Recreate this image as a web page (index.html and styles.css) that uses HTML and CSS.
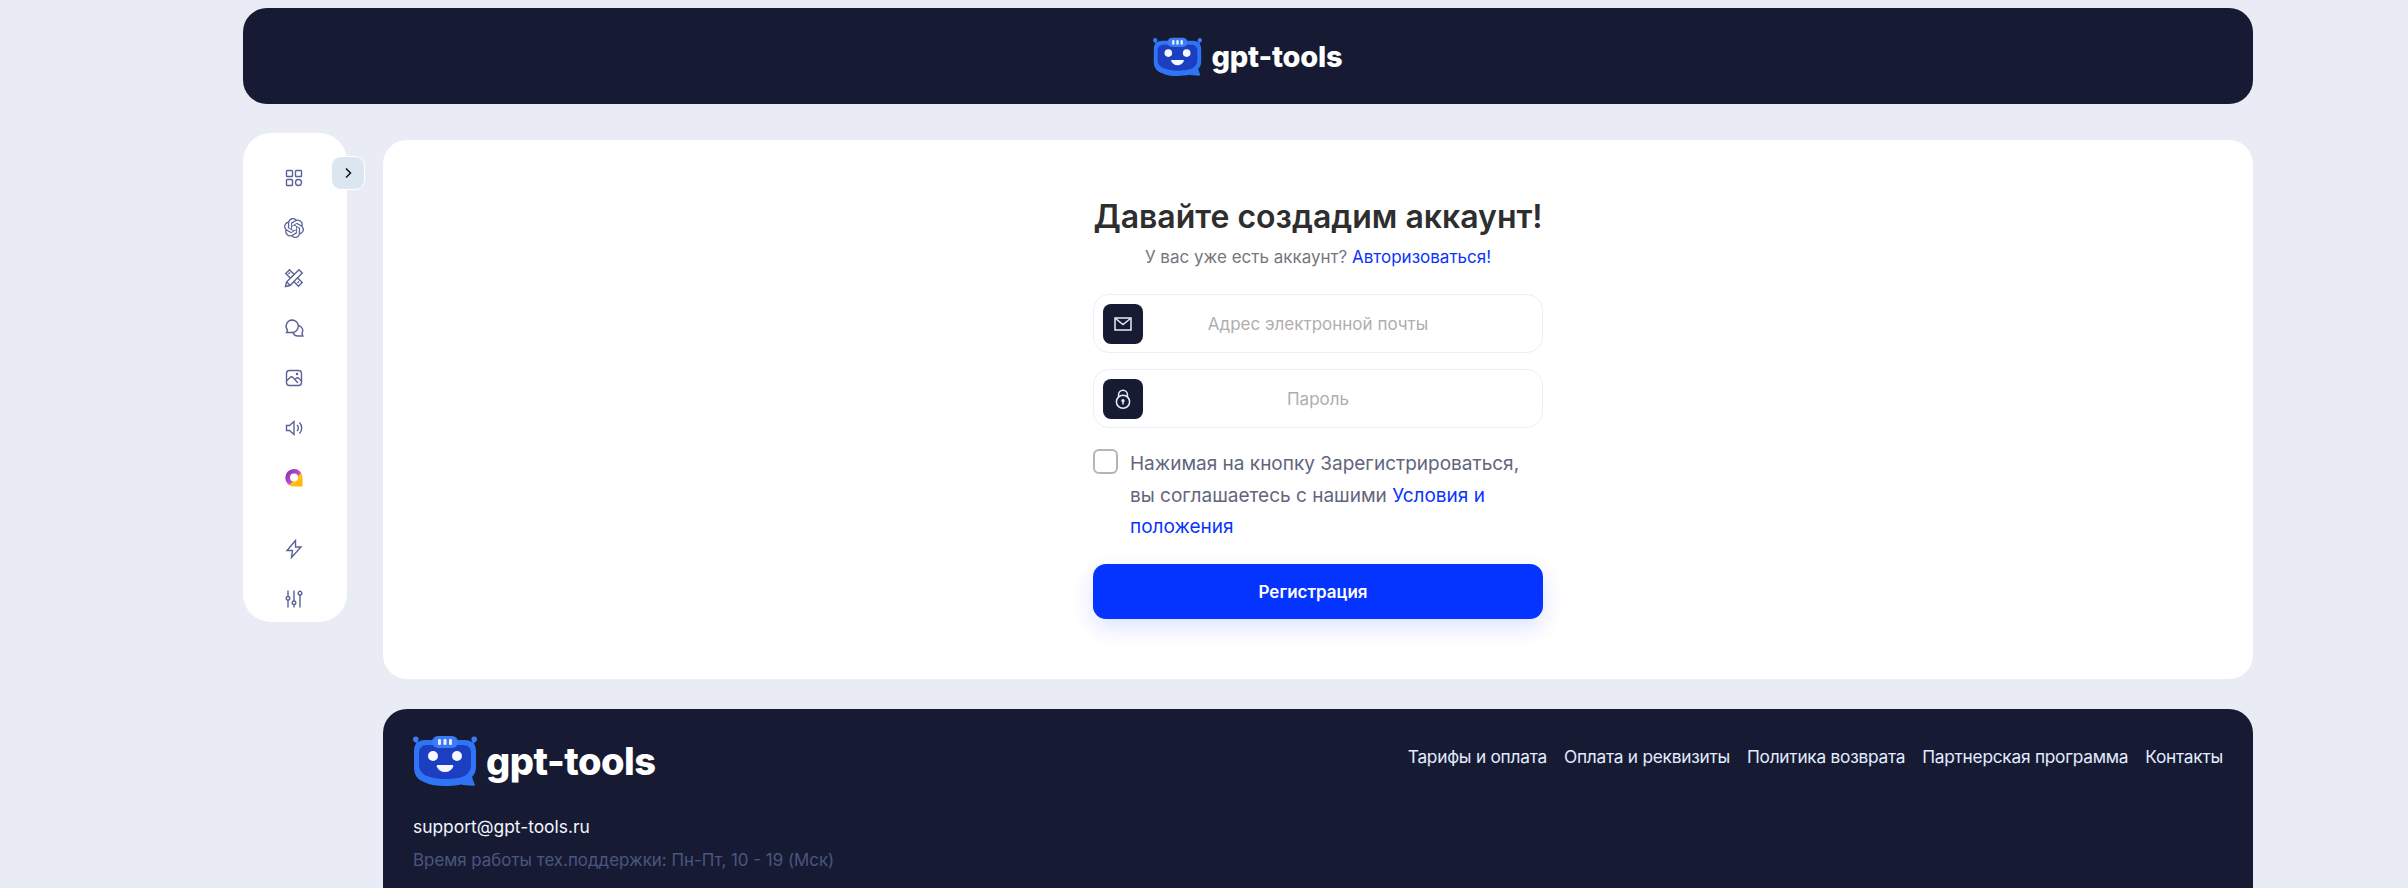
FILE: index.html
```html
<!DOCTYPE html>
<html lang="ru">
<head>
<meta charset="utf-8">
<title>gpt-tools</title>
<link rel="stylesheet" href="styles.css">
</head>
<body>
<svg class="defs" width="0" height="0" aria-hidden="true">
  <defs>
    <linearGradient id="qg" x1="0" y1="0" x2="1" y2="1">
      <stop offset="0" stop-color="#6a2fb0"/><stop offset=".55" stop-color="#c94fc9"/><stop offset=".6" stop-color="#ffc414"/><stop offset="1" stop-color="#ffb300"/>
    </linearGradient>
    <symbol id="robot" viewBox="0 0 64 51">
      <path d="M5 9 2 5" stroke="#2f6bf0" stroke-width="2.500" stroke-linecap="round"/>
      <path d="M59 9 62 5" stroke="#2f6bf0" stroke-width="2.500" stroke-linecap="round"/>
      <circle cx="2.800" cy="4.200" r="2.800" fill="#3b7bf6"/><circle cx="61.200" cy="4.200" r="2.800" fill="#3b7bf6"/>
      <path d="M12 5h40c7 0 11 4 11 11v16c0 5-2 8-4 10l3 8.500c-4 .5-10 0-14-1-5 1-11 1.500-16 1.500-8 0-15-1-21-4-6-2-10-7-10-14V16C1 9 5 5 12 5Z" fill="#2f74f4"/>
      <path d="M14 10h36c5 0 8 3 8 8v12c0 6-4 10-9 12-5 1.500-11 2-17 2-7 0-13-1-18-3-5-2-8-6-8-11V18c0-5 3-8 8-8Z" fill="#1b3fc0"/>
      <rect x="19" y="1" width="26" height="12" rx="6" fill="#3b7bf6"/>
      <rect x="25" y="4" width="3" height="6" rx="1.200" fill="#eaf1ff"/><rect x="30.500" y="4" width="3" height="6" rx="1.200" fill="#eaf1ff"/><rect x="36" y="4" width="3" height="6" rx="1.200" fill="#eaf1ff"/>
      <circle cx="20" cy="21" r="5" fill="#f4f7ff"/><circle cx="44" cy="21" r="5" fill="#f4f7ff"/>
      <path d="M25 30h14c1 0 1.500.7 1.300 1.500C39 35 36 37 32 37s-7-2-8.300-5.500C23.500 30.700 24 30 25 30Z" fill="#f4f7ff"/>
    </symbol>
  </defs>
</svg>
<div class="page">
  <header class="topbar">
    <a class="logo logo-small" href="#"><svg class="robot"><use href="#robot"/></svg><span>gpt-tools</span></a>
  </header>
  <div class="layout">
    <aside class="sidebar">
      <button class="toggle" type="button" aria-label="Развернуть"><svg viewBox="0 0 12 12" width="12" height="12"><path d="M4 1.500 8.500 6 4 10.500" fill="none" stroke="#111" stroke-width="1.500"/></svg></button>
      <nav class="nav">
        <svg class="ico" viewBox="0 0 20 20"><rect x="2.500" y="2.500" width="6" height="6" rx=".8"/><rect x="11.500" y="2.500" width="6" height="6" rx=".8"/><rect x="2.500" y="11.500" width="6" height="6" rx=".8"/><circle cx="14.500" cy="14.500" r="3"/></svg>
        <svg class="ico ico-solid" viewBox="0 0 24 24"><path d="M22.2819 9.8211a5.9847 5.9847 0 0 0-.5157-4.9108 6.0462 6.0462 0 0 0-6.5098-2.9A6.0651 6.0651 0 0 0 4.9807 4.1818a5.9847 5.9847 0 0 0-3.9977 2.9 6.0462 6.0462 0 0 0 .7427 7.0966 5.98 5.98 0 0 0 .511 4.9107 6.051 6.051 0 0 0 6.5146 2.9001A5.9847 5.9847 0 0 0 13.2599 24a6.0557 6.0557 0 0 0 5.7718-4.2058 5.9894 5.9894 0 0 0 3.9977-2.9001 6.0557 6.0557 0 0 0-.7475-7.0729zm-9.022 12.6081a4.4755 4.4755 0 0 1-2.8764-1.0408l.1419-.0804 4.7783-2.7582a.7948.7948 0 0 0 .3927-.6813v-6.7369l2.02 1.1686a.071.071 0 0 1 .038.052v5.5826a4.504 4.504 0 0 1-4.4945 4.4944zm-9.6607-4.1254a4.4708 4.4708 0 0 1-.5346-3.0137l.142.0852 4.783 2.7582a.7712.7712 0 0 0 .7806 0l5.8428-3.3685v2.3324a.0804.0804 0 0 1-.0332.0615L9.74 19.9502a4.4992 4.4992 0 0 1-6.1408-1.6464zM2.3408 7.8956a4.485 4.485 0 0 1 2.3655-1.9728V11.6a.7664.7664 0 0 0 .3879.6765l5.8144 3.3543-2.0201 1.1685a.0757.0757 0 0 1-.071 0l-4.8303-2.7865A4.504 4.504 0 0 1 2.3408 7.872zm16.5963 3.8558L13.1038 8.364 15.1192 7.2a.0757.0757 0 0 1 .071 0l4.8303 2.7913a4.4944 4.4944 0 0 1-.6765 8.1042v-5.6772a.79.79 0 0 0-.407-.667zm2.0107-3.0231l-.142-.0852-4.7735-2.7818a.7759.7759 0 0 0-.7854 0L9.409 9.2297V6.8974a.0662.0662 0 0 1 .0284-.0615l4.8303-2.7866a4.4992 4.4992 0 0 1 6.6802 4.66zM8.3065 12.863l-2.02-1.1638a.0804.0804 0 0 1-.038-.0567V6.0742a4.4992 4.4992 0 0 1 7.3757-3.4537l-.142.0805L8.704 5.459a.7948.7948 0 0 0-.3927.6813zm1.0976-2.3654l2.602-1.4998 2.6069 1.4998v2.9994l-2.5974 1.4997-2.6067-1.4997Z"/></svg>
        <svg class="ico" viewBox="0 0 20 20"><path class="ico-white" d="M5.500 1.800 1.800 5.500 14.500 18.200l3.700-3.700ZM4.500 6l1.500-1.500M7.500 9 9 7.500M10.500 12l1.500-1.500M13.500 15l1.500-1.500"/><path class="ico-white" d="M15 1.800 18.200 5 6 17.500l-4.500 1 1-4.500ZM2.800 14l3.200 3.200"/></svg>
        <svg class="ico" viewBox="0 0 20 20"><path d="M8 2a6.300 6.300 0 0 1 6.300 6.300A6.300 6.300 0 0 1 8 14.500H2.500l1-2.300A6.300 6.300 0 0 1 8 2Z"/><path d="M14.200 7.500a5 5 0 0 1 3.800 7.500l.8 3h-5a5 5 0 0 1-4.800-3.500"/></svg>
        <svg class="ico" viewBox="0 0 20 20"><rect x="2.500" y="2.500" width="15" height="15" rx="3"/><path d="m2.500 13 3.500-3.500c1-1 2-1 3 0l5 5.500M10.500 12l1.500-1.500c1-1 2-1 3 0l2.500 2.500"/><circle cx="13" cy="6" r=".6"/></svg>
        <svg class="ico" viewBox="0 0 20 20"><path d="M2.500 7.500v5h3l4.500 4V3.500l-4.500 4Z"/><path d="M13 7a4 4 0 0 1 0 6M15.500 4.500a8 8 0 0 1 0 11"/></svg>
        <svg class="ico ico-q" viewBox="0 0 20 20"><path fill-rule="evenodd" d="M10 1a8.500 8.500 0 0 1 8.500 8.500V18.500H10A8.500 8.500 0 0 1 10 1Zm0 4.500a4 4 0 1 0 0 8 4 4 0 0 0 0-8Z" fill="url(#qg)"/></svg>
        <svg class="ico ico-gap" viewBox="0 0 20 20"><path d="M11.500 1.500 3 11.500h5.500l-1 7 9.500-10.500h-5.500Z"/></svg>
        <svg class="ico" viewBox="0 0 20 20"><path d="M4 1.500v6M4 11v7.500M10 1.500v10.500M10 15.500v3M16 6v12.500M16 1.500v1"/><circle cx="4" cy="9.300" r="1.800"/><circle cx="10" cy="13.800" r="1.800"/><circle cx="16" cy="4.200" r="1.800"/></svg>
      </nav>
    </aside>
    <div class="content">
      <main class="card">
        <form class="form">
          <h1 class="title">Давайте создадим аккаунт!</h1>
          <p class="subtitle">У вас уже есть аккаунт? <a href="#">Авторизоваться!</a></p>
          <label class="field field-first">
            <span class="field-icon"><svg viewBox="0 0 20 20" width="20" height="20"><path d="M2 4h16v12H2Z" fill="none" stroke="#e6ebf5" stroke-width="1.500"/><path d="m2.500 4.500 7.500 6 7.500-6" fill="none" stroke="#e6ebf5" stroke-width="1.500"/></svg></span>
            <span class="placeholder">Адрес электронной почты</span>
          </label>
          <label class="field">
            <span class="field-icon"><svg viewBox="0 0 20 20" width="22" height="22"><circle cx="10" cy="12.500" r="6" fill="none" stroke="#e6ebf5" stroke-width="1.400"/><path d="M6 8V6a4 4 0 0 1 8 0v2" fill="none" stroke="#e6ebf5" stroke-width="1.400"/><circle cx="10" cy="11.500" r="1.500" fill="#e6ebf5"/><path d="M10 12v3" stroke="#e6ebf5" stroke-width="1.400"/></svg></span>
            <span class="placeholder">Пароль</span>
          </label>
          <div class="agree">
            <span class="checkbox"></span>
            <p class="agree-text">Нажимая на кнопку Зарегистрироваться, вы соглашаетесь с нашими <a href="#">Условия и положения</a></p>
          </div>
          <button class="submit" type="button">Регистрация</button>
        </form>
      </main>
      <footer class="footer">
        <div class="footer-top">
          <a class="logo logo-big" href="#"><svg class="robot"><use href="#robot"/></svg><span>gpt-tools</span></a>
          <nav class="footer-links">
            <a href="#">Тарифы и оплата</a>
            <a href="#">Оплата и реквизиты</a>
            <a href="#">Политика возврата</a>
            <a href="#">Партнерская программа</a>
            <a href="#">Контакты</a>
          </nav>
        </div>
        <p class="mail">support@gpt-tools.ru</p>
        <p class="hours">Время работы тех.поддержки: Пн-Пт, 10 - 19 (Мск)</p>
      </footer>
    </div>
  </div>
</div>
</body>
</html>
```
FILE: styles.css
```css
* { box-sizing: border-box; }
html, body { margin: 0; height: 888px; overflow: hidden; }
body { background: #e9ecf4; font-family: Inter, "Noto Sans", sans-serif; color: #2f2f2f; }
a { text-decoration: none; color: inherit; }
p, h1 { margin: 0; }
.defs { display: block; height: 0; }
.page { width: 2010px; margin-left: 243px; padding-top: 8px; }
.topbar { height: 96px; background: #161b33; border-radius: 24px; display: flex; align-items: center; justify-content: center; }
.logo { display: flex; align-items: center; color: #fff; font-weight: 800; }
.robot { display: block; flex: none; }
.logo-small { font-size: 29px; gap: 9px; letter-spacing: -.2px; }
.logo-small .robot { width: 49px; height: 39px; }
.logo-big { font-size: 38px; gap: 9px; letter-spacing: -.5px; }
.logo-big .robot { width: 64px; height: 51px; }
.layout { display: grid; grid-template-columns: 104px 1fr; column-gap: 36px; align-items: start; margin-top: 29px; }
.sidebar { position: relative; height: 489px; background: #fff; border-radius: 28px; }
.toggle { position: absolute; left: 88px; top: 23px; width: 34px; height: 34px; padding: 0; display: flex; align-items: center; justify-content: center; background: #dce6f0; border: 1px solid #fff; border-radius: 10px; }
.nav { display: flex; flex-direction: column; align-items: center; gap: 30px; padding-top: 35px; padding-right: 2px; }
.ico { width: 20px; height: 20px; display: block; fill: none; stroke: #5a6296; stroke-width: 1.400; }
.ico-solid { fill: #5a6296; stroke: none; }
.ico-white { fill: #fff; }
.ico-q { stroke: none; }
.ico-gap { margin-top: 21px; }
.content { padding-top: 7px; min-width: 0; }
.card { height: 539px; background: #fff; border-radius: 24px; display: flex; justify-content: center; padding-top: 55px; }
.form { width: 450px; display: flex; flex-direction: column; }
.title { font-size: 32px; line-height: 44px; font-weight: 600; text-align: center; color: #2e2e2e; white-space: nowrap; }
.subtitle { margin-top: 7px; font-size: 17px; line-height: 22px; text-align: center; color: #77767c; }
.subtitle a { color: #0a33ff; }
.field { height: 59px; display: flex; align-items: center; padding-left: 9px; padding-right: 49px; background: #fff; border: 1px solid #eceef6; border-radius: 16px; }
.field + .field { margin-top: 16px; }
.field-first { margin-top: 26px; }
.field-icon { width: 40px; height: 40px; flex: none; display: flex; align-items: center; justify-content: center; background: #161b33; border-radius: 8px; }
.placeholder { flex: 1; text-align: center; font-size: 17px; color: #b0aeae; }
.agree { display: flex; align-items: flex-start; gap: 12px; margin-top: 21px; }
.checkbox { width: 25px; height: 25px; flex: none; border: 2px solid #b5b5b8; border-radius: 6px; background: #fff; }
.agree-text { margin-top: -1px; font-size: 19px; line-height: 31.500px; color: #62657d; }
.agree-text a { color: #0a33ff; }
.submit { height: 55px; margin-top: 21.500px; padding-right: 16px; flex: none; background: #0533ff; border: 0; border-radius: 13px; color: #fff; font: 600 17px Inter, sans-serif; box-shadow: 0 8px 22px rgba(5, 51, 255, .14); }
.footer { height: 300px; margin-top: 30px; padding: 26px 30px; background: #161b33; border-radius: 24px 24px 0 0; }
.footer-top { display: flex; justify-content: space-between; align-items: flex-start; }
.footer-links { display: flex; gap: 17px; padding-top: 10px; font-size: 17.300px; line-height: 24px; color: #e3ecff; letter-spacing: -.25px; }
.mail { margin-top: 29px; font-size: 17.400px; line-height: 24px; color: #f2f5ff; }
.hours { margin-top: 9px; font-size: 16.900px; line-height: 24px; color: #4a5680; }
```
